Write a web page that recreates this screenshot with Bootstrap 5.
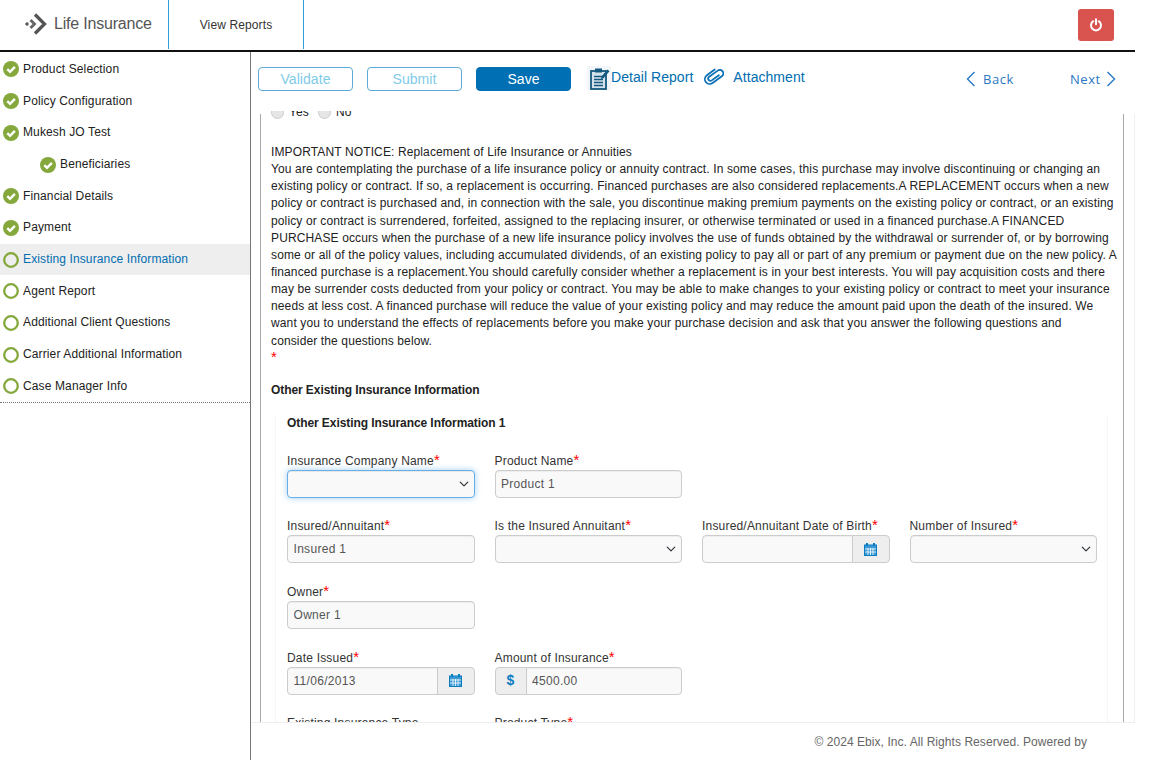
<!DOCTYPE html>
<html lang="en">
<head>
<meta charset="utf-8">
<title>Life Insurance</title>
<link href="https://cdn.jsdelivr.net/npm/bootstrap@5.3.0/dist/css/bootstrap.min.css" rel="stylesheet">
<style>
html,body{height:760px;overflow:hidden}
body{font-family:"Liberation Sans",Arial,sans-serif;font-size:12px;line-height:17.14px;letter-spacing:.125px;color:#222;background:#fff}
.app-shell{width:1135px;height:760px;display:flex;flex-direction:column}
.top-bar{height:52px;flex:none;border-bottom:2px solid #111;display:flex;align-items:stretch}
.brand-box{width:168px;display:flex;align-items:center;padding:0 0 2px 25px;gap:7px;font-size:16px;color:#555;letter-spacing:-.2px}
.brand-box svg{display:block}
.report-tab{width:136px;border-left:1px solid #2a9fd8;border-right:1px solid #2a9fd8;display:flex;align-items:center;justify-content:center;padding:3px 0 0;color:#333;margin-bottom:1px}
.power-btn{width:36px;height:32px;margin:9px 21px 0 auto;background:#d9534f;border:0;border-radius:3px;padding:0;display:flex;align-items:center;justify-content:center}
.body-wrap{flex:1;display:flex;min-height:0}
.side-col{width:251px;flex:none;border-right:1px solid #777}
.step-list{list-style:none;margin:1.6px 0 0;padding:0;border-bottom:1px dotted #777}
.step-row{height:31.7px;display:flex;align-items:center;padding-left:3px;gap:4px;color:#222}
.step-row.sub{padding-left:40px}
.step-row.now{background:#eee;color:#006db0}
.step-dot{width:16px;height:16px;flex:none;display:block}
.main-col{flex:1;min-width:0;display:flex;flex-direction:column}
.tool-row{height:59px;flex:none;display:flex;align-items:flex-start;padding:15px 0 0 7px}
.act-btn{width:95px;height:24px;padding:0;font-size:14px;line-height:22px;border-radius:4px;margin-right:14px;background:#fff;letter-spacing:.05px}
.act-btn.ghost{border:1px solid #5aa9d6;color:#7fcbe8}
.act-btn.solid{background:#006fb3;border:1px solid #006fb3;color:#fff}
.tool-link{font-size:14px;color:#006db0;text-decoration:none;line-height:20px;display:flex;margin-top:-1px;letter-spacing:.05px}
.tool-link span{padding-top:1px}
.link-report{margin-left:2px}
.link-attach{margin-left:11px}
.link-attach svg{margin-top:1px;margin-right:9px}
.pager-box{margin-left:auto;margin-right:19px;margin-top:4px;display:flex;gap:56px}
.nav-link-txt{font-family:"Open Sans",sans-serif;font-size:13px;line-height:16px;color:#2a78c4;text-decoration:none;display:flex;align-items:center;justify-content:space-between;letter-spacing:.55px}
.back-link{width:48px}
.next-link{width:46px}
.scroll-wrap{flex:1;min-height:0;padding:0 11px 0 9px;background:linear-gradient(#f0f0f0,#f0f0f0) right 3px/1px 100% no-repeat}
.scroll-clip{height:100%;overflow:hidden;background:linear-gradient(#aaa,#aaa) left 3px/1px 100% no-repeat,linear-gradient(#aaa,#aaa) right 3px/1px 100% no-repeat}
.scroll-inner{margin-top:-6px;padding:0 6px 0 11px}
.radio-line{height:16px;display:flex;align-items:center;gap:5px;color:#222}
.fake-radio{width:13px;height:13px;border-radius:50%;background:#e6e6e6;border:1px solid #ccc;display:block;margin-top:-2px}
.notice-txt{margin:23px 0 0}
.req{color:#f00;font-size:15px;line-height:0}
.sect-h{font-weight:700;margin:15px 0 0;letter-spacing:-.08px}
.form-zone{margin:0 10px 0 4px;padding:0 0 0 11px;border-left:1px solid #f6f6f6;border-right:1px solid #f6f6f6}
.sub-h{font-weight:700;margin:16px 0 19.7px;letter-spacing:-.08px}
.fld-row{--bs-gutter-x:20px;width:830px;height:65.6px;align-content:flex-start}
.fld-row label{display:block;height:17px;line-height:16px;color:#333;white-space:nowrap;margin:1px 0 0;letter-spacing:.19px}
.form-control.ctl,.form-select.ctl{height:28px;min-height:28px;padding:3px 5.5px;font-size:12px;line-height:20px;letter-spacing:.3px;color:#555;background-color:#f9f9f9;border:1px solid #ccc;border-radius:4px;box-shadow:inset 0 1px 1px rgba(0,0,0,.05)}
.form-select.ctl{padding-right:24px;background-position:right 4px center;background-size:12px 10px}
.form-select.ctl.hot{border-color:#66afe9;box-shadow:inset 0 1px 1px rgba(0,0,0,.075),0 0 6px rgba(102,175,233,.6)}
.addon{padding:0;background:#eee;border:1px solid #ccc;border-radius:4px;height:28px;display:flex;align-items:center;justify-content:center;color:#0a7cc0;font-weight:700;font-size:14px}
.addon.cal{width:38px}
.addon.usd{width:32px}
.foot-bar{height:38px;flex:none;border-top:1px solid #eee;text-align:right;padding:11px 48px 0 0;color:#666;background:#fff;letter-spacing:.06px;position:relative}
</style>
</head>
<body>
<div class="app-shell">
  <header class="top-bar">
    <div class="brand-box">
      <svg width="22" height="22" viewBox="0 0 22 22"><circle cx="2" cy="11" r="1.700" fill="#555"/><path d="M5.500 7 9.500 11l-4 4" fill="none" stroke="#666" stroke-width="2.800"/><path d="M10 1.500 19.500 11 10 20.500" fill="none" stroke="#555" stroke-width="3.300"/></svg>
      <span>Life Insurance</span>
    </div>
    <div class="report-tab">View Reports</div>
    <button class="power-btn" type="button" aria-label="Log out">
      <svg width="14" height="14" viewBox="0 0 14 14" fill="none" stroke="#fff" stroke-width="2" stroke-linecap="round"><path d="M4.300 3.200a5 5 0 1 0 5.400 0"/><path d="M7 1.300v5"/></svg>
    </button>
  </header>
  <div class="body-wrap">
    <aside class="side-col">
      <ul class="step-list">
        <li class="step-row"><svg class="step-dot"><use href="#done"/></svg>Product Selection</li>
        <li class="step-row"><svg class="step-dot"><use href="#done"/></svg>Policy Configuration</li>
        <li class="step-row"><svg class="step-dot"><use href="#done"/></svg>Mukesh JO Test</li>
        <li class="step-row sub"><svg class="step-dot"><use href="#done"/></svg>Beneficiaries</li>
        <li class="step-row"><svg class="step-dot"><use href="#done"/></svg>Financial Details</li>
        <li class="step-row"><svg class="step-dot"><use href="#done"/></svg>Payment</li>
        <li class="step-row now"><svg class="step-dot"><use href="#todo"/></svg>Existing Insurance Information</li>
        <li class="step-row"><svg class="step-dot"><use href="#todo"/></svg>Agent Report</li>
        <li class="step-row"><svg class="step-dot"><use href="#todo"/></svg>Additional Client Questions</li>
        <li class="step-row"><svg class="step-dot"><use href="#todo"/></svg>Carrier Additional Information</li>
        <li class="step-row"><svg class="step-dot"><use href="#todo"/></svg>Case Manager Info</li>
      </ul>
    </aside>
    <main class="main-col">
      <div class="tool-row">
        <button class="btn act-btn ghost" type="button">Validate</button>
        <button class="btn act-btn ghost" type="button">Submit</button>
        <button class="btn act-btn solid" type="button">Save</button>
        <a class="tool-link link-report" href="#"><svg width="24" height="24" viewBox="0 0 24 24"><rect width="24" height="24" fill="#f3f6f8"/><rect x="4" y="5" width="15" height="18" fill="#d5e2ea" stroke="#14597f" stroke-width="1.800"/><rect x="8" y="2.500" width="7" height="4" fill="#14597f"/><path d="M7 10.500h9M7 13.500h9M7 16.500h9M7 19.500h9" stroke="#14597f" stroke-width="1.400"/><path d="M14.500 10.500 20.500 3.500l2 1.700-6 7-2.500.8z" fill="#14597f"/></svg><span>Detail Report</span></a>
        <a class="tool-link link-attach" href="#"><svg width="20" height="18" viewBox="0 0 20 18" fill="none" stroke="#0a6fb5" stroke-width="2" stroke-linecap="round"><g transform="rotate(54 10 9) translate(10 9) scale(.88) translate(-9.500 -10)"><path d="M12 5v10a2.500 2.500 0 0 1-5 0V3a4 4 0 0 1 8 0v13a5.500 5.500 0 0 1-11 0V5"/></g></svg><span>Attachment</span></a>
        <div class="pager-box">
          <a class="nav-link-txt back-link" href="#"><svg width="10" height="16" viewBox="0 0 10 16" fill="none" stroke="#2a78c4" stroke-width="1.400"><path d="M8.500 1 1.500 8l7 7"/></svg><span>Back</span></a>
          <a class="nav-link-txt next-link" href="#"><span>Next</span><svg width="10" height="16" viewBox="0 0 10 16" fill="none" stroke="#2a78c4" stroke-width="1.400"><path d="M1.500 1l7 7-7 7"/></svg></a>
        </div>
      </div>
      <div class="scroll-wrap">
      <div class="scroll-clip">
        <div class="scroll-inner">
          <div class="radio-line"><span class="fake-radio"></span><span>Yes</span><span class="fake-radio ms-1"></span><span>No</span></div>
          <p class="notice-txt">IMPORTANT NOTICE: Replacement of Life Insurance or Annuities<br>You are contemplating the purchase of a life insurance policy or annuity contract. In some cases, this purchase may involve discontinuing or changing an existing policy or contract. If so, a replacement is occurring. Financed purchases are also considered replacements.A REPLACEMENT occurs when a new policy or contract is purchased and, in connection with the sale, you discontinue making premium payments on the existing policy or contract, or an existing policy or contract is surrendered, forfeited, assigned to the replacing insurer, or otherwise terminated or used in a financed purchase.A FINANCED PURCHASE occurs when the purchase of a new life insurance policy involves the use of funds obtained by the withdrawal or surrender of, or by borrowing some or all of the policy values, including accumulated dividends, of an existing policy to pay all or part of any premium or payment due on the new policy. A financed purchase is a replacement.You should carefully consider whether a replacement is in your best interests. You will pay acquisition costs and there may be surrender costs deducted from your policy or contract. You may be able to make changes to your existing policy or contract to meet your insurance needs at less cost. A financed purchase will reduce the value of your existing policy and may reduce the amount paid upon the death of the insured. We want you to understand the effects of replacements before you make your purchase decision and ask that you answer the following questions and<br>consider the questions below.<br><span class="req">*</span></p>
          <p class="sect-h">Other Existing Insurance Information</p>
          <div class="form-zone">
            <p class="sub-h">Other Existing Insurance Information 1</p>
            <div class="row fld-row">
              <div class="col-3"><label>Insurance Company Name<span class="req">*</span></label><select class="form-select ctl hot"><option></option></select></div>
              <div class="col-3"><label>Product Name<span class="req">*</span></label><input class="form-control ctl" value="Product 1"></div>
            </div>
            <div class="row fld-row">
              <div class="col-3"><label>Insured/Annuitant<span class="req">*</span></label><input class="form-control ctl" value="Insured 1"></div>
              <div class="col-3"><label>Is the Insured Annuitant<span class="req">*</span></label><select class="form-select ctl"><option></option></select></div>
              <div class="col-3"><label>Insured/Annuitant Date of Birth<span class="req">*</span></label><div class="input-group"><input class="form-control ctl"><span class="input-group-text addon cal"><svg width="13" height="13"><use href="#cal"/></svg></span></div></div>
              <div class="col-3"><label>Number of Insured<span class="req">*</span></label><select class="form-select ctl"><option></option></select></div>
            </div>
            <div class="row fld-row">
              <div class="col-3"><label>Owner<span class="req">*</span></label><input class="form-control ctl" value="Owner 1"></div>
            </div>
            <div class="row fld-row">
              <div class="col-3"><label>Date Issued<span class="req">*</span></label><div class="input-group"><input class="form-control ctl" value="11/06/2013"><span class="input-group-text addon cal"><svg width="13" height="13"><use href="#cal"/></svg></span></div></div>
              <div class="col-3"><label>Amount of Insurance<span class="req">*</span></label><div class="input-group"><span class="input-group-text addon usd">$</span><input class="form-control ctl" value="4500.00"></div></div>
            </div>
            <div class="row fld-row">
              <div class="col-3"><label>Existing Insurance Type</label></div>
              <div class="col-3"><label>Product Type<span class="req">*</span></label></div>
            </div>
          </div>
        </div>
      </div>
      </div>
      <footer class="foot-bar">© 2024 Ebix, Inc. All Rights Reserved. Powered by</footer>
    </main>
  </div>
</div>
<svg width="0" height="0" class="d-none" aria-hidden="true">
  <symbol id="done" viewBox="0 0 16 16"><circle cx="8" cy="8" r="8" fill="#84a83c"/><path d="M4.300 8.200 7 10.900 11.900 5.800" fill="none" stroke="#fff" stroke-width="2.400"/></symbol>
  <symbol id="todo" viewBox="0 0 16 16"><circle cx="8" cy="8" r="6.800" fill="none" stroke="#84a83c" stroke-width="2.300"/></symbol>
  <symbol id="cal" viewBox="0 0 13 13"><rect x=".5" y="2" width="12" height="10.500" fill="#3a9ad6" stroke="#0a7cc0"/><path d="M3 0v3M10 0v3" stroke="#0a7cc0" stroke-width="2"/><path d="M1 6h11M1 9h11M4 5v7M6.500 5v7M9 5v7" stroke="#fff" stroke-width=".8"/></symbol>
</svg>
<script src="https://cdn.jsdelivr.net/npm/bootstrap@5.3.0/dist/js/bootstrap.bundle.min.js"></script>
</body>
</html>
